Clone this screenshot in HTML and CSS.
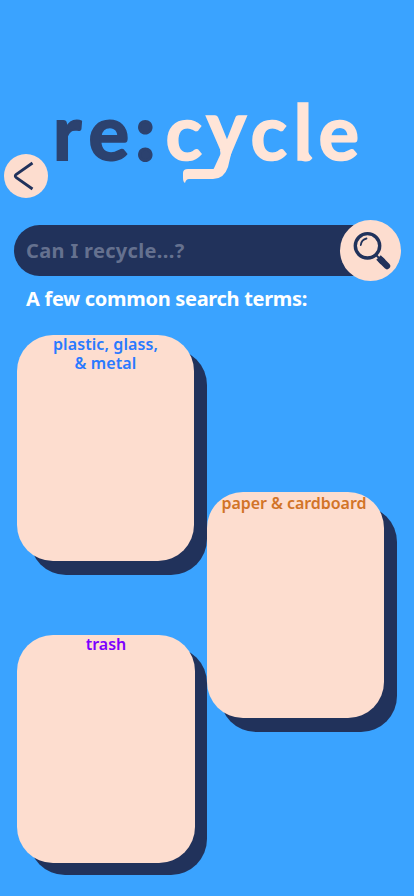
FILE: index.html
```html
<!DOCTYPE html>
<html lang="en">
<head>
<meta charset="utf-8">
<meta name="viewport" content="width=device-width, initial-scale=1">
<title>re:cycle</title>
<link rel="stylesheet" href="styles.css">
</head>
<body>
<main class="app">
  <header class="header">
    <button class="back" aria-label="Back">
      <svg width="44" height="44" viewBox="0 0 44 44"><path d="M28.500 9 L12 20.500 Q10.500 22 12 23.300 L28.500 35"/></svg>
    </button>
    <svg class="logo" width="320" height="110" viewBox="48 90 320 110">
      <text class="logo-dark" y="160" x="53 88.500 135.500">re<tspan class="colon">:</tspan></text>
      <text class="logo-light" y="160 155 160 160 160" x="165.500 206.300 250.500 293.500 318.500">cycle</text>
      <path class="logo-tail" d="M220 150 L221.500 161 Q222 169 213 169 H188 Q183 169 183 173 V178 Q183 182 185 183 Q186 179 189 179 H213 Q224 179 228 167 L232 150 Z"/>
      <path class="logo-tail" d="M298.500 153 Q299 161.500 305 161.500 Q310 162 312.500 158 L309.500 154.500 L308 152 Z"/>
    </svg>
  </header>
  <div class="search">
    <span class="placeholder">Can I recycle...?</span>
    <button class="search-button" aria-label="Search">
      <svg width="61" height="61" viewBox="0 0 61 61">
        <circle class="lens" cx="27.500" cy="25.800" r="12.200"/>
        <path class="shine" d="M20.800 25 Q21.500 19.500 26.500 18.500"/>
        <path class="neck" d="M36 35 L40 39"/>
        <path class="tip" d="M38.500 37.500 L43 42"/>
        <path class="handle" d="M41.500 40.500 L47 46"/>
      </svg>
    </button>
  </div>
  <h2 class="heading">A few common search terms:</h2>
  <section class="cards">
    <div class="column">
      <a class="card plastic">plastic, glass,<br>&amp; metal</a>
      <a class="card trash">trash</a>
    </div>
    <div class="column right">
      <a class="card paper">paper &amp; cardboard</a>
    </div>
  </section>
</main>
</body>
</html>
```
FILE: styles.css
```css
* { box-sizing: border-box; }
body {
  margin: 0;
  background: #3aa3ff;
  font-family: "Trebuchet MS", "Noto Sans", sans-serif;
  font-weight: 700;
}
.app { height: 896px; overflow: hidden; }
button { padding: 0; border: 0; background: #fdddcf; border-radius: 50%; }
button svg { display: block; }
.header { height: 225px; padding: 90px 0 0 4px; display: flex; align-items: flex-start; }
.back { width: 44px; height: 44px; margin-top: 64px; flex: none; }
.back path { fill: none; stroke: #21325b; stroke-width: 2.8; }
.logo { flex: none; overflow: visible; font: 700 76px Lato, sans-serif; }
.logo-dark { fill: #2c426f; stroke: #2c426f; stroke-width: 2; }
.colon { stroke-width: 3; }
.logo-light { fill: #ffe5d8; stroke: #ffe5d8; stroke-width: 1.6; }
.logo-tail { fill: #ffe5d8; }
.search {
  width: 386px;
  height: 51px;
  margin-left: 14px;
  padding-left: 12px;
  border-radius: 26px;
  background: #21325b;
  display: flex;
  align-items: center;
  justify-content: space-between;
}
.placeholder { color: #65718f; font-size: 20px; letter-spacing: 0.34px; }
.search-button { width: 61px; height: 61px; margin: -1px -1px 0 0; flex: none; }
.lens, .shine, .neck, .tip, .handle { fill: none; stroke: #21325b; }
.lens { stroke-width: 3.4; }
.shine { stroke-width: 1.8; stroke-linecap: round; }
.neck { stroke-width: 2; }
.tip { stroke-width: 6.4; }
.handle { stroke-width: 6.4; stroke-linecap: round; }
.heading {
  margin: 9px 0 0 26px;
  font-size: 20px;
  line-height: 28px;
  letter-spacing: -0.3px;
  color: #fff;
  white-space: nowrap;
}
.cards { display: flex; margin: 22px 0 0 17px; }
.column { width: 190px; display: flex; flex-direction: column; gap: 74px; flex: none; }
.right { padding-top: 157px; }
.card {
  width: 177px;
  height: 226px;
  border-radius: 36px;
  background: #fdddcf;
  box-shadow: 13px 14px #21325b;
  text-align: center;
  font-size: 16px;
  font-weight: 600;
  line-height: 19px;
  white-space: nowrap;
}
.plastic { color: #2979ff; letter-spacing: 0.1px; }
.trash { width: 178px; height: 228px; box-shadow: 12px 12px #21325b; color: #7c00ff; }
.paper { color: #d27428; padding-top: 2px; letter-spacing: -0.05px; text-indent: -3px; }
```
